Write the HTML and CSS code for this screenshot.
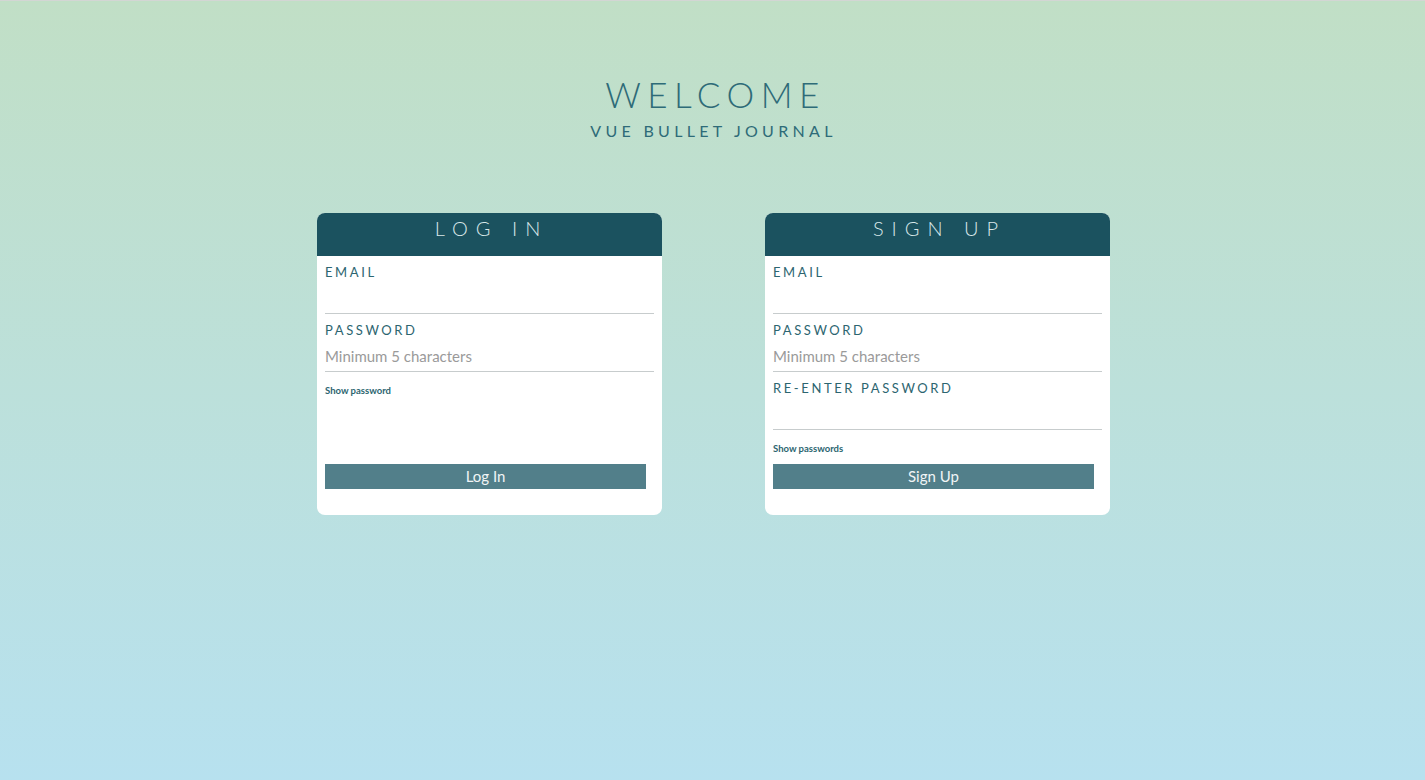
FILE: index.html
```html
<!DOCTYPE html>
<html>
<head>
<meta charset="utf-8">
<link rel="stylesheet" href="styles.css">
</head>
<body>
<div class="page">
  <header class="hero">
    <h1 class="hero-title">WELCOME</h1>
    <p class="hero-sub">VUE BULLET JOURNAL</p>
  </header>
  <main class="cards">
    <section class="card">
      <div class="card-head">LOG IN</div>
      <div class="card-body">
        <label class="field">
          <span class="field-label">EMAIL</span>
          <input class="field-input" type="text">
        </label>
        <label class="field">
          <span class="field-label">PASSWORD</span>
          <input class="field-input" type="password" placeholder="Minimum 5 characters">
        </label>
        <div class="toggle">Show password</div>
        <button class="btn">Log In</button>
      </div>
    </section>
    <section class="card">
      <div class="card-head">SIGN UP</div>
      <div class="card-body">
        <label class="field">
          <span class="field-label">EMAIL</span>
          <input class="field-input" type="text">
        </label>
        <label class="field">
          <span class="field-label">PASSWORD</span>
          <input class="field-input" type="password" placeholder="Minimum 5 characters">
        </label>
        <label class="field">
          <span class="field-label">RE-ENTER PASSWORD</span>
          <input class="field-input" type="password">
        </label>
        <div class="toggle">Show passwords</div>
        <button class="btn">Sign Up</button>
      </div>
    </section>
  </main>
</div>
</body>
</html>
```
FILE: styles.css
```css
* { box-sizing: border-box; }
html, body { margin: 0; padding: 0; height: 100%; }
body {
  font-family: Lato, "Open Sans", sans-serif;
  background: linear-gradient(to bottom, #c1dfc6 0%, #b7e1ef 100%);
  border-top: 1px solid #d3d6d4;
  min-height: 780px;
}
.page {
  display: flex;
  flex-direction: column;
  align-items: center;
}
.hero {
  text-align: center;
  margin-top: 72px;
}
.hero-title {
  margin: 0;
  font-weight: 300;
  font-size: 35px;
  line-height: 42px;
  letter-spacing: 6.5px;
  padding-left: 6px;
  color: #2e6b78;
}
.hero-sub {
  margin: 6px 0 0;
  font-size: 16px;
  line-height: 20px;
  font-weight: 400;
  letter-spacing: 4.3px;
  padding-left: 2px;
  color: #2e6b78;
}
.cards {
  margin-top: 72px;
  display: grid;
  grid-template-columns: 345px 345px;
  column-gap: 103px;
  margin-left: 2px;
}
.card {
  background: #fff;
  border-radius: 8px;
  overflow: hidden;
  display: flex;
  flex-direction: column;
}
.card-head {
  background: #1b525f;
  height: 43px;
  color: #d8e7e9;
  text-align: center;
  font-size: 20px;
  font-weight: 300;
  letter-spacing: 8px;
  line-height: 31px;
  padding-left: 4px;
}
.card-body {
  flex: 1;
  display: flex;
  flex-direction: column;
  padding: 8px 8px 26px;
}
.field {
  display: flex;
  flex-direction: column;
  margin-bottom: 8px;
}
.field-label {
  font-size: 13px;
  line-height: 16px;
  letter-spacing: 2.6px;
  color: #2c6570;
}
.field-input {
  margin-top: 2px;
  height: 32px;
  border: 0;
  border-bottom: 1px solid #c7cccd;
  outline: none;
  padding: 0;
  font-family: inherit;
  font-size: 15px;
  color: #333;
  background: transparent;
}
.field-input::placeholder { color: #9a9a9a; }
.toggle {
  margin-top: 5px;
  font-size: 9.5px;
  font-weight: 700;
  line-height: 12px;
  color: #2c6570;
}
.btn {
  margin-top: auto;
  width: 321px;
  height: 25px;
  border: 0;
  background: #527f8a;
  color: #f1f5f6;
  font-family: inherit;
  font-size: 15px;
  line-height: 23px;
  padding: 0;
}
.card:last-child .btn { margin-top: 9px; }
```
